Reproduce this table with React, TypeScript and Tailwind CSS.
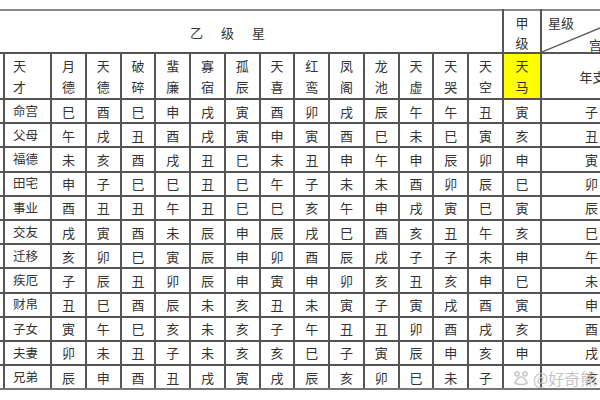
import React from "react"

const cols = ["月德", "天德", "破碎", "蜚廉", "寡宿", "孤辰", "天喜", "红鸾", "凤阁", "龙池", "天虚", "天哭", "天空"]

const rows: [string, string][] = [
  ["命宫", "巳酉巳申戌寅酉卯戌辰午午丑寅子"],
  ["父母", "午戌丑酉戌寅申寅酉巳未巳寅亥丑"],
  ["福德", "未亥酉戌丑巳未丑申午申辰卯申寅"],
  ["田宅", "申子巳巳丑巳午子未未酉卯辰巳卯"],
  ["事业", "酉丑丑午丑巳巳亥午申戌寅巳寅辰"],
  ["交友", "戌寅酉未辰申辰戌巳酉亥丑午亥巳"],
  ["迁移", "亥卯巳寅辰申卯酉辰戌子子未申午"],
  ["疾厄", "子辰丑卯辰申寅申卯亥丑亥申巳未"],
  ["财帛", "丑巳酉辰未亥丑未寅子寅戌酉寅申"],
  ["子女", "寅午巳亥未亥子午丑丑卯酉戌亥酉"],
  ["夫妻", "卯未丑子未亥亥巳子寅辰申亥申戌"],
  ["兄弟", "辰申酉丑戌寅戌辰亥卯巳未子巳亥"],
]

const cell = "border-2 border-[#555] p-0 text-center align-middle"

export default function App() {
  return (
    <div
      className="relative w-[600px] h-[400px] overflow-hidden bg-white pt-[9px] text-[#333]"
      style={{ fontFamily: '"Noto Sans CJK SC", "Noto Sans", sans-serif' }}
    >
      <table className="table-fixed border-collapse w-[641px] text-[13px] leading-none">
        <colgroup>
          <col className="w-[4px]" />
          <col className="w-[47px]" />
          {cols.map((c) => (
            <col key={c} className="w-[34.77px]" />
          ))}
          <col className="w-[38px]" />
          <col className="w-[100px]" />
        </colgroup>
        <tbody>
          <tr className="h-[43px]">
            <td colSpan={15} className="border-t-2 border-t-[#888] border-r-2 border-r-[#555] border-b-2 border-b-[#555] p-0 align-middle">
              <div className="flex justify-center gap-[18px] pr-[47px] pt-[2px]">
                <span>乙</span>
                <span>级</span>
                <span>星</span>
              </div>
            </td>
            <td className={cell + " border-t-[#888]"}>
              <div className="flex flex-col items-center gap-[7px] pt-[2px]">
                <span>甲</span>
                <span>级</span>
              </div>
            </td>
            <td className={cell + " relative border-t-[#888] border-r-0 align-top"}>
              <svg className="absolute inset-0 w-full h-full" viewBox="0 0 100 41" preserveAspectRatio="none">
                <line x1="0" y1="41" x2="100" y2="0" stroke="#555" strokeWidth="1.2" />
              </svg>
              <div className="relative text-left pl-[6px] pt-[5px]">星级</div>
              <div className="relative text-left pl-[47px] pt-[9px]">宫位</div>
            </td>
          </tr>
          <tr className="h-[46px]">
            <td className="border-b-2 border-[#555] p-0" />
            <td className={cell + " text-left"}>
              <div className="flex flex-col items-start gap-[8px] pl-[8px]">
                <span>天</span>
                <span>才</span>
              </div>
            </td>
            {cols.map((c) => (
              <td key={c} className={cell}>
                <div className="flex flex-col items-center gap-[8px]">
                  <span>{c[0]}</span>
                  <span>{c[1]}</span>
                </div>
              </td>
            ))}
            <td className={cell + " bg-[#ffff00]"}>
              <div className="flex flex-col items-center gap-[8px]">
                <span>天</span>
                <span>马</span>
              </div>
            </td>
            <td className={cell + " border-r-0"}>
              <span className="inline-block pl-[2px]">年支</span>
            </td>
          </tr>
          {rows.map(([label, vals], i) => {
            const last = i === rows.length - 1
            const chars = Array.from(vals)
            return (
              <tr key={label} className="h-[24.2px]">
                <td className={"border-b-2 p-0 " + (last ? "border-b-[#777]" : "border-b-[#555]")} />
                <td className={cell + " text-[12.5px] pr-[4px]" + (last ? " border-b-[#777]" : "")}>{label}</td>
                {chars.map((ch, j) => (
                  <td
                    key={j}
                    className={cell + (j === 14 ? " border-r-0" : "") + (last ? " border-b-[#777]" : "")}
                  >
                    {last && j === 13 ? "" : ch}
                  </td>
                ))}
              </tr>
            )
          })}
        </tbody>
      </table>

      {/* watermark */}
      <div className="absolute left-[512px] top-[366px] flex items-center gap-[3px] text-[16px] text-[#c4c4c4] whitespace-nowrap">
        <svg width="18" height="18" viewBox="0 0 18 18" fill="none" stroke="#c4c4c4" strokeWidth="1.6">
          <circle cx="5" cy="5" r="2" />
          <circle cx="13" cy="5" r="2" />
          <path d="M3 14c1-4 4-6 6-6s5 2 6 6c-2 2-10 2-12 0z" />
        </svg>
        <span>@好奇熊</span>
      </div>
    </div>
  )
}
